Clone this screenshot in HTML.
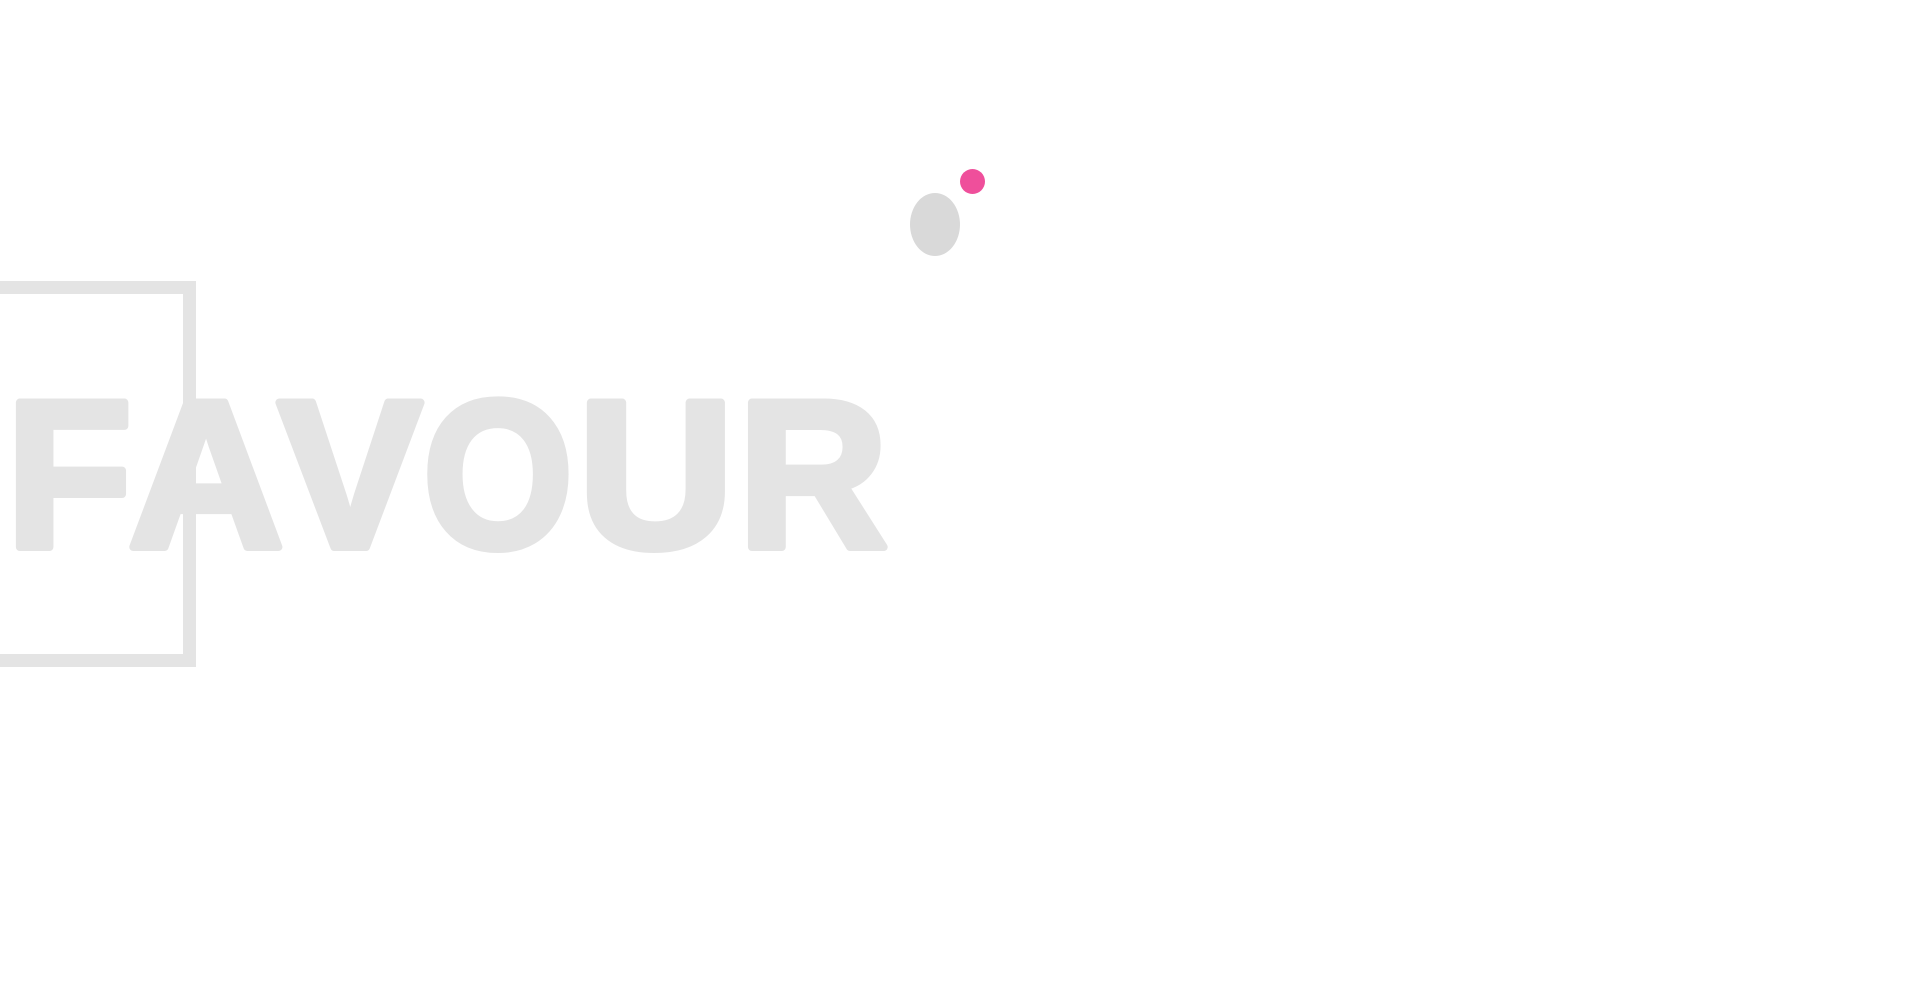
<!DOCTYPE html>
<html><head><meta charset="utf-8"><style>
html,body{margin:0;padding:0;background:#fff;width:1920px;height:982px;overflow:hidden}
</style></head><body>
<svg width="1920" height="982" viewBox="0 0 1920 982" xmlns="http://www.w3.org/2000/svg" style="position:absolute;left:0;top:0">
<rect x="-20" y="287.5" width="209.5" height="373" fill="none" stroke="#e4e4e4" stroke-width="13"/>
<g style="font-family:'Liberation Sans',sans-serif;font-weight:700;font-size:210px" fill="#e4e4e4" stroke="#e4e4e4" stroke-width="8" stroke-linejoin="round">
<text x="6" y="547" textLength="126" lengthAdjust="spacingAndGlyphs">F</text>
<text x="128" y="547" textLength="156" lengthAdjust="spacingAndGlyphs">A</text>
<text x="278" y="547" textLength="144" lengthAdjust="spacingAndGlyphs">V</text>
<text x="423" y="547" textLength="150" lengthAdjust="spacingAndGlyphs">O</text>
<text x="578" y="547" textLength="156" lengthAdjust="spacingAndGlyphs">U</text>
<text x="738" y="547" textLength="150" lengthAdjust="spacingAndGlyphs">R</text>
</g>
<ellipse cx="935" cy="224.5" rx="25" ry="31.5" fill="#d9d9d9"/>
<circle cx="972.5" cy="181.5" r="12.5" fill="#ef4f9b"/>
</svg>
</body></html>
